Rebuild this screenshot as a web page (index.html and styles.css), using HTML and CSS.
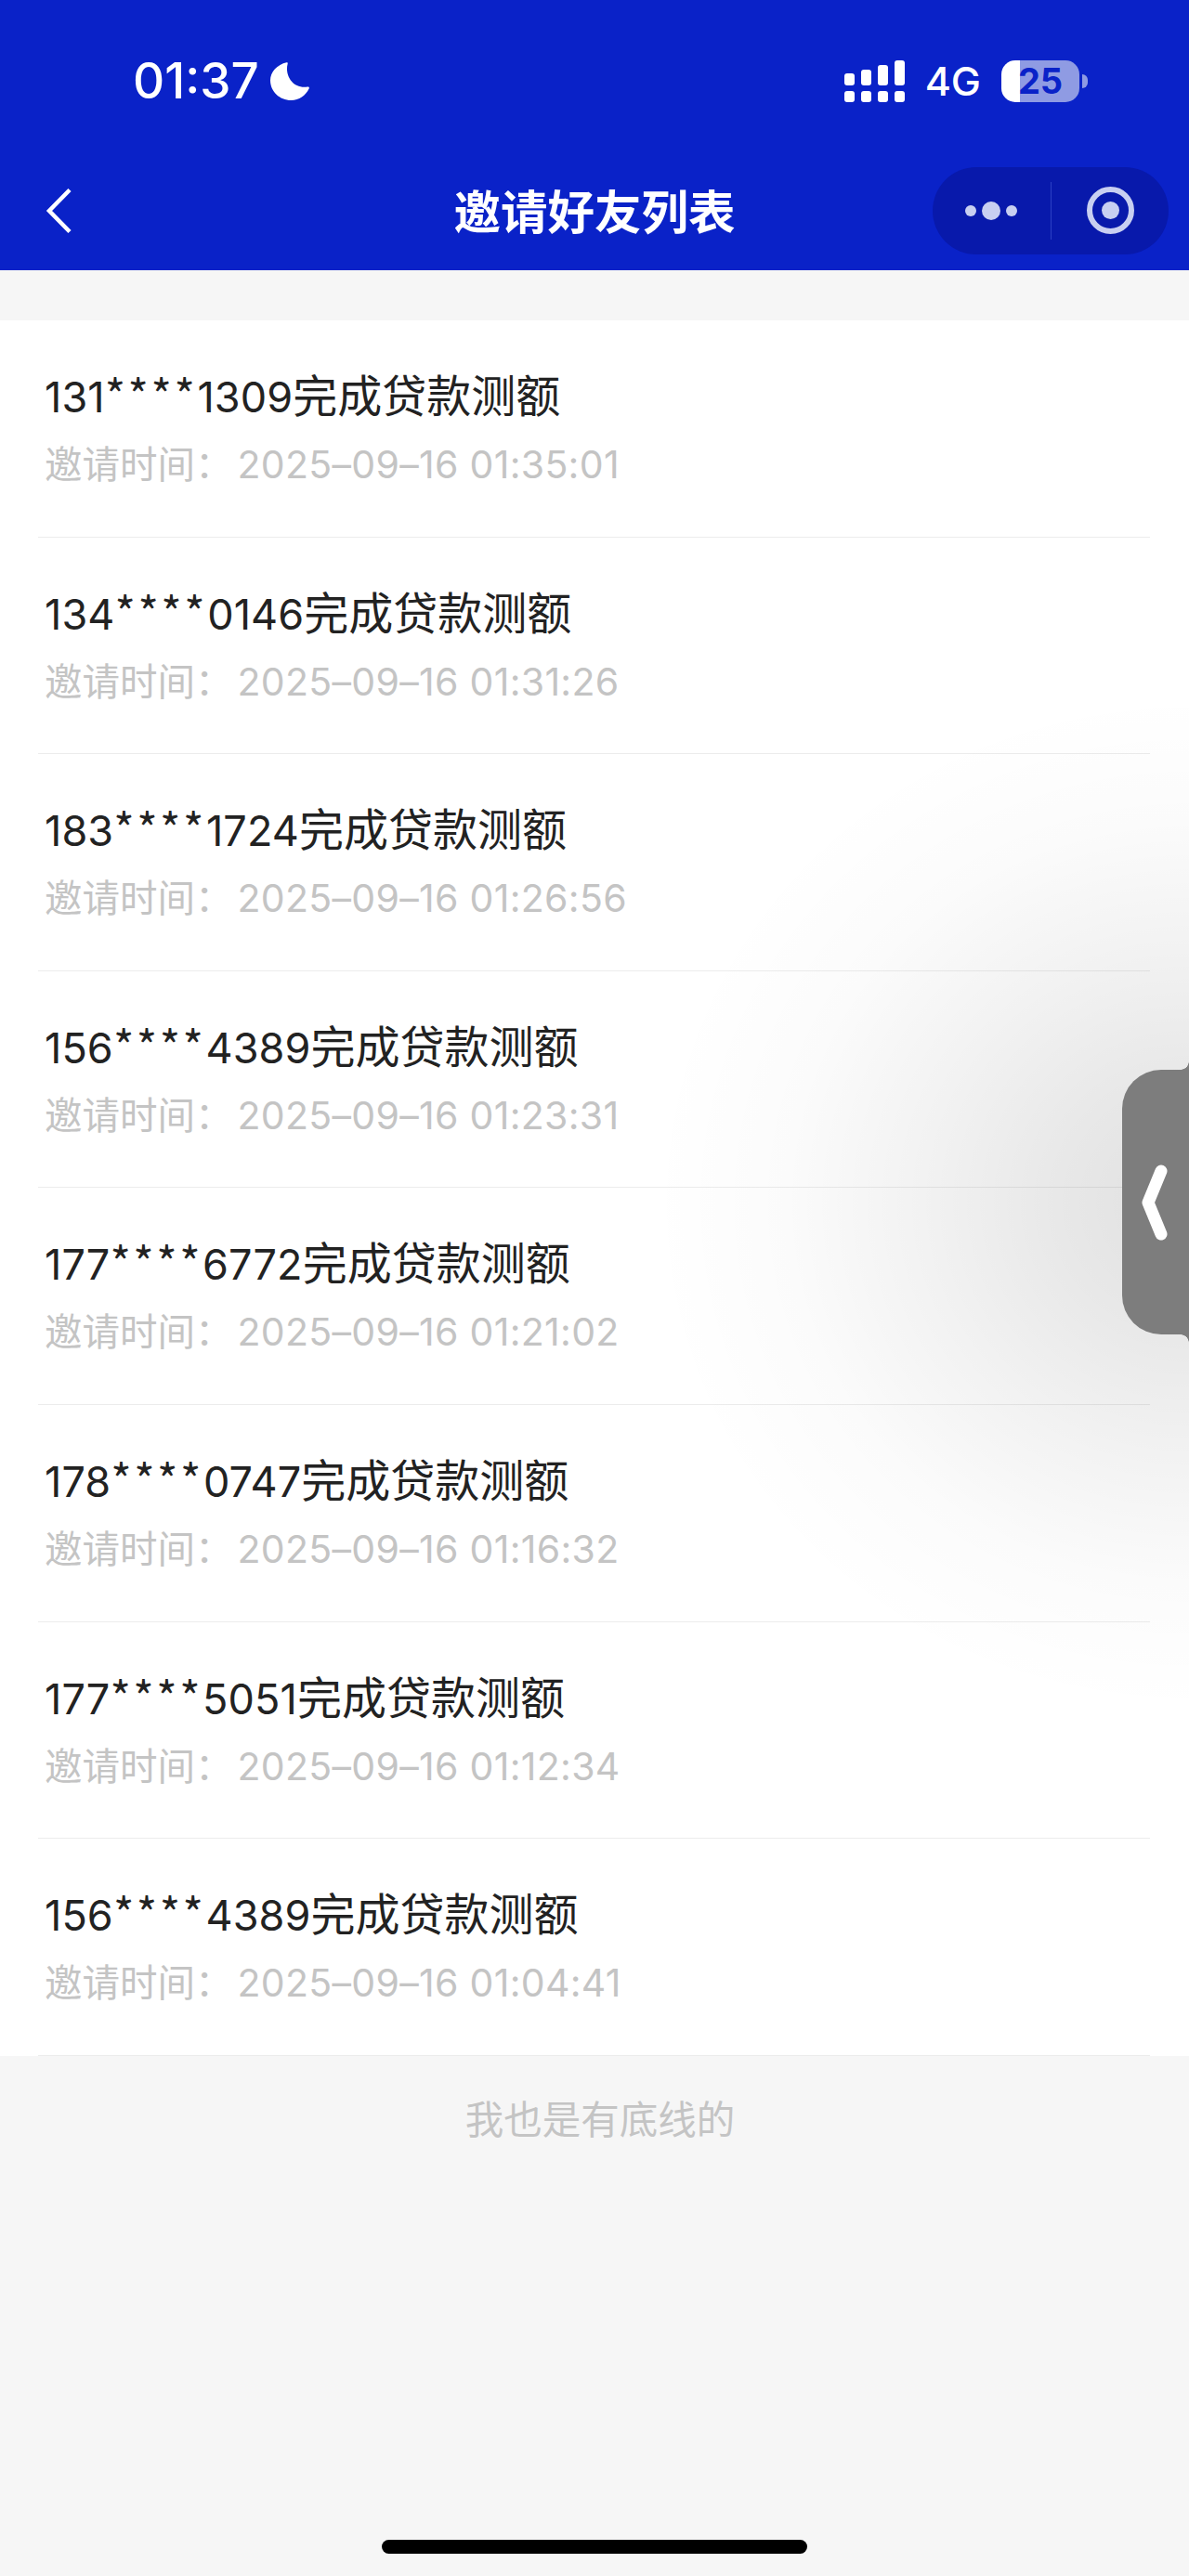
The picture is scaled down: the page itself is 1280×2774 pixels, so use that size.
FILE: index.html
```html
<!DOCTYPE html>
<html lang="zh-CN">
<head>
<meta charset="utf-8">
<title>邀请好友列表</title>
<link rel="stylesheet" href="styles.css">
</head>
<body>
<div class="page">
  <header class="header">
    <div class="status">
      <div class="status-left">
        <span class="time">01:37</span>
        <svg class="moon" viewBox="0 0 42 41"><path d="M17.5 .3C18.6 0 19 1 18.6 2C15.5 14 24 29 40 26.6C41.6 26.4 42.3 27.4 41.6 28.6C38 36 31 41 22.5 41C10 41 0 31.5 0 19.5C0 10.5 7.5 2.5 17.5 .3Z"/></svg>
      </div>
      <div class="status-right">
        <svg class="signal" viewBox="0 0 65 45">
          <rect x="0" y="14" width="11" height="13" rx="3"/><rect x="18" y="10" width="11" height="17" rx="3"/><rect x="36" y="5" width="11" height="22" rx="3"/><rect x="54" y="0" width="11" height="27" rx="3"/>
          <rect x="0" y="33" width="11" height="12" rx="3"/><rect x="18" y="33" width="11" height="12" rx="3"/><rect x="36" y="33" width="11" height="12" rx="3"/><rect x="54" y="33" width="11" height="12" rx="3"/>
        </svg>
        <span class="net">4G</span>
        <div class="battery-wrap">
          <div class="battery">25</div>
          <span class="nub"></span>
        </div>
      </div>
    </div>
    <nav class="nav">
      <svg class="back" viewBox="0 0 30 50"><path d="M26 2.5L4 25L26 47.5"/></svg>
      <h1 class="title">邀请好友列表</h1>
      <div class="capsule">
        <div class="more"><i class="dot"></i><i class="dot dot-big"></i><i class="dot"></i></div>
        <span class="sep"></span>
        <div class="target"><span class="ring"><i class="core"></i></span></div>
      </div>
    </nav>
  </header>

  <ul class="list">
    <li class="row"><p class="name"><span class="num">131</span><span class="stars">****</span><span class="num">1309</span>完成贷款测额</p><p class="when"><span class="label">邀请时间：</span><span class="date">2025–09–16 01:35:01</span></p></li>
    <li class="row"><p class="name"><span class="num">134</span><span class="stars">****</span><span class="num">0146</span>完成贷款测额</p><p class="when"><span class="label">邀请时间：</span><span class="date">2025–09–16 01:31:26</span></p></li>
    <li class="row"><p class="name"><span class="num">183</span><span class="stars">****</span><span class="num">1724</span>完成贷款测额</p><p class="when"><span class="label">邀请时间：</span><span class="date">2025–09–16 01:26:56</span></p></li>
    <li class="row"><p class="name"><span class="num">156</span><span class="stars">****</span><span class="num">4389</span>完成贷款测额</p><p class="when"><span class="label">邀请时间：</span><span class="date">2025–09–16 01:23:31</span></p></li>
    <li class="row"><p class="name"><span class="num">177</span><span class="stars">****</span><span class="num">6772</span>完成贷款测额</p><p class="when"><span class="label">邀请时间：</span><span class="date">2025–09–16 01:21:02</span></p></li>
    <li class="row"><p class="name"><span class="num">178</span><span class="stars">****</span><span class="num">0747</span>完成贷款测额</p><p class="when"><span class="label">邀请时间：</span><span class="date">2025–09–16 01:16:32</span></p></li>
    <li class="row"><p class="name"><span class="num">177</span><span class="stars">****</span><span class="num">5051</span>完成贷款测额</p><p class="when"><span class="label">邀请时间：</span><span class="date">2025–09–16 01:12:34</span></p></li>
    <li class="row"><p class="name"><span class="num">156</span><span class="stars">****</span><span class="num">4389</span>完成贷款测额</p><p class="when"><span class="label">邀请时间：</span><span class="date">2025–09–16 01:04:41</span></p></li>
  </ul>
  <p class="end">我也是有底线的</p>

  <div class="glow"></div>
  <div class="handle">
    <svg class="handle-arrow" viewBox="0 0 28 82"><path d="M21 7L7 41L21 75"/></svg>
  </div>
  <div class="home-bar"></div>
</div>
</body>
</html>
```

FILE: styles.css
```css
* { box-sizing: border-box; margin: 0; padding: 0; }
html, body { background: #f6f6f6; }
body { font-family: "Noto Sans CJK SC", sans-serif; }
.page { position: relative; width: 1280px; height: 2774px; overflow: hidden; background: #f6f6f6; }

.header { height: 291px; background: #0a22c8; color: #fff; }
.status { height: 174px; display: flex; align-items: center; justify-content: space-between; padding: 0 109px 0 143px; }
.status-left { display: flex; align-items: center; gap: 12px; }
.time { font-family: Inter, sans-serif; font-size: 53px; font-weight: 500; line-height: 60px; }
.moon { width: 42px; height: 41px; fill: #fff; }
.status-right { display: flex; align-items: center; gap: 22px; }
.signal { width: 65px; height: 45px; fill: #fff; }
.net { font-family: Inter, sans-serif; font-size: 43px; font-weight: 500; line-height: 50px; }
.battery-wrap { display: flex; align-items: center; gap: 3px; }
.battery { width: 84px; height: 45px; border-radius: 15px; background: linear-gradient(90deg, #fff 24%, #8f9be3 24%); color: #0a22c8; font-family: Inter, sans-serif; font-size: 38px; font-weight: 700; line-height: 45px; text-align: center; }
.nub { width: 6px; height: 15px; border-radius: 0 8px 8px 0; background: #8f9be3; }

.nav { height: 117px; padding: 0 22px 12px 49px; display: grid; grid-template-columns: 1fr auto 1fr; align-items: center; }
.nav .title { margin: 0 0 4px -27px; }
.back { width: 30px; height: 50px; fill: none; stroke: #fff; stroke-width: 4.5; }
.title { font-size: 50.5px; font-weight: 600; line-height: 60px; }
.capsule { justify-self: end; width: 254px; height: 94px; border-radius: 47px; background: #0819ab; display: flex; align-items: center; }
.more { width: 127px; display: flex; align-items: center; justify-content: flex-end; gap: 6px; padding-right: 36px; }
.dot { width: 12px; height: 12px; border-radius: 50%; background: #c8cff1; }
.dot-big { width: 20px; height: 20px; }
.sep { width: 1px; height: 62px; background: #2c40c4; }
.target { flex: 1; display: flex; justify-content: center; }
.ring { width: 51px; height: 51px; border: 6px solid #c8cff1; border-radius: 50%; display: flex; align-items: center; justify-content: center; }
.core { width: 19px; height: 19px; border-radius: 50%; background: #c8cff1; }

.list { list-style: none; margin-top: 54px; background: #fff; }
.row { height: 233.6px; padding: 48px 0 0 48px; position: relative; }
.row::after { content: ""; position: absolute; left: 41px; right: 42px; bottom: 0; height: 1px; background: #ececec; }
.name { font-size: 48px; line-height: 60px; color: #222; }
.num { font-family: Inter, sans-serif; font-size: 45px; letter-spacing: .1px; }
.stars { letter-spacing: 2.5px; }
.when { margin-top: 15px; font-size: 40.5px; line-height: 50px; color: #c4c4c4; }
.date { font-family: Inter, sans-serif; font-size: 41px; letter-spacing: .3px; margin-left: 5px; }
.end { margin-top: 41px; padding-left: 12px; font-size: 41.5px; line-height: 50px; color: #c4c4c4; text-align: center; }

.glow { position: absolute; left: 560px; top: 730px; width: 720px; height: 1130px; pointer-events: none; background: radial-gradient(ellipse 580px 550px at 100% 50%, rgba(0,0,0,.12) 0%, rgba(0,0,0,.09) 25%, rgba(0,0,0,.05) 50%, rgba(0,0,0,.015) 75%, rgba(0,0,0,0) 100%); }
.handle { position: absolute; left: 1208px; top: 1152px; width: 72px; height: 285px; background: #7d7d7d; border-radius: 42px 0 0 42px; display: flex; align-items: center; padding-left: 21px; }
.handle::before, .handle::after { content: ""; position: absolute; right: 0; width: 9px; height: 9px; }
.handle::before { top: -9px; background: radial-gradient(circle at 0 0, transparent 8.5px, #7d7d7d 9px); }
.handle::after { bottom: -9px; background: radial-gradient(circle at 0 100%, transparent 8.5px, #7d7d7d 9px); }
.handle-arrow { width: 28px; height: 82px; fill: none; stroke: #fff; stroke-width: 13; stroke-linecap: round; stroke-linejoin: round; }
.home-bar { position: absolute; left: 411px; top: 2735px; width: 458px; height: 15px; border-radius: 8px; background: #000; }
```
